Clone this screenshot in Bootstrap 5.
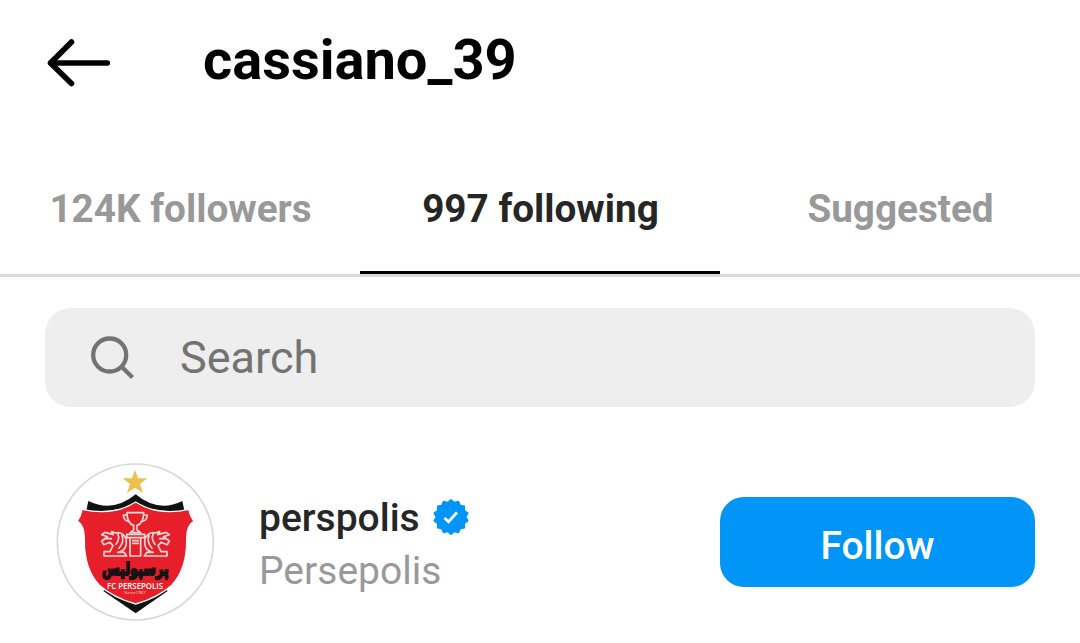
<!DOCTYPE html>
<html lang="en">
<head>
<meta charset="utf-8">
<meta name="viewport" content="width=device-width, initial-scale=1">
<title>cassiano_39</title>
<link href="https://cdn.jsdelivr.net/npm/bootstrap@5.3.0/dist/css/bootstrap.min.css" rel="stylesheet">
<style>
body{font-family:Roboto,"Liberation Sans",sans-serif;background:#fff;color:#262626;height:643px;overflow:hidden}
.top-bar{height:144px;padding:30px 45px 0}
.title{font-size:56px;line-height:60px;font-weight:700;color:#000;margin:0 0 0 92px}
.back{width:66px;height:66px}
.tabs{height:133px;border-bottom:3px solid #dadada}
.tabs .nav-link{font-size:38.7px;line-height:46px;font-weight:700;color:#999;padding:42px 0 0 1px;height:130px;border-bottom:3px solid transparent;border-radius:0;white-space:nowrap;text-align:center}
.tabs .nav-link.active{color:#262626;border-bottom-color:#000}
.search-box{margin:31px 45px 0;height:99px;border-radius:26px;background:#eee;padding:0 45px}
.search-box input,.search-box input:focus{background:none;border:0;box-shadow:none;font-size:45px;line-height:54px;padding:0;margin-left:45px;color:#737373}
.search-box input::placeholder{color:#737373;opacity:1}
.person{padding:48px 45px 0 50px}
.names{margin:40px 0 0 39px}
.user{font-size:39px;line-height:46px;font-weight:500;color:#262626}
.verified{margin:-2px 0 0 12px}
.full{font-size:39px;line-height:46px;color:#999;margin-top:7px}
.follow{width:315px;height:90px;margin-top:42px;border-radius:24px;background:#0095f6;border:0;color:#fff;font-size:39px;font-weight:500;line-height:46px;padding:8px 0 0}
</style>
</head>
<body>
<header class="top-bar d-flex align-items-start">
  <svg class="back" viewBox="45 30 66 66" fill="none" stroke="#000" stroke-width="5.6" stroke-linecap="round" stroke-linejoin="round"><path d="M107.300 63H50.500M71.500 42L50.500 63L71.500 83.500"/></svg>
  <h1 class="title">cassiano_39</h1>
</header>
<nav class="tabs row g-0">
  <div class="col-4"><a class="nav-link" href="#">124K followers</a></div>
  <div class="col-4"><a class="nav-link active" href="#">997 following</a></div>
  <div class="col-4"><a class="nav-link" href="#">Suggested</a></div>
</nav>
<main>
  <div class="search-box d-flex align-items-center">
    <svg class="flex-shrink-0" width="45" height="45" viewBox="90 335 45 45" fill="none" stroke="#737373" stroke-width="4.300"><circle cx="109.700" cy="355" r="16.500"/><path d="M121.500 366.500L132.500 377.500"/></svg>
    <input class="form-control" type="text" placeholder="Search" aria-label="Search">
  </div>
  <section class="person d-flex align-items-start">
    <svg class="flex-shrink-0" width="170" height="175" viewBox="0 0 510 525">
      <circle cx="256" cy="261" r="234" fill="#fff" stroke="#d8d8d8" stroke-width="5"/>
      <path d="M255 44L264 70H292L270 87L279 114L255 98L231 114L240 87L218 70H246Z" fill="#edbf4c"/>
      <path d="M115 138Q190 174 257 118Q324 174 397 138L408 190H104Z" fill="#111"/>
      <path d="M160 408L257 475L353 408L330 390H180Z" fill="#111"/>
      <path d="M96 163Q190 184 257 141Q324 184 417 163Q420 183 432 198Q410 210 410 250Q412 340 366 390Q325 428 257 447Q189 428 147 390Q101 340 103 250Q103 210 82 198Q93 183 96 163Z" fill="#e71f2a" stroke="#fff" stroke-width="4"/>
      <g fill="none" stroke="#ffd9d5" stroke-width="5" stroke-linejoin="round" stroke-linecap="round">
        <path d="M231 173H281Q281 205 261 211V225L272 233H240L251 225V211Q231 205 231 173ZM231 180H220Q221 199 239 200M281 180H292Q291 199 273 200"/>
        <path d="M230 238H284V248H230ZM240 250V303H272V250M248 257H265M248 265H265"/>
        <g id="bull">
          <path d="M228 250Q215 229 198 234L184 230L190 239L165 232L155 239L173 245L155 258L161 269L180 262L189 272L180 290H162V303H230L222 292H203Q234 287 228 250ZM204 238Q210 252 198 268M216 242Q224 259 207 280M168 251L184 251"/>
        </g>
        <use href="#bull" transform="translate(513 0) scale(-1 1)"/>
      </g>
      <text x="256" y="360" text-anchor="middle" textLength="200" lengthAdjust="spacingAndGlyphs" font-family="DejaVu Sans, sans-serif" font-weight="700" font-size="52" fill="#191113" stroke="#191113" stroke-width="6" direction="rtl">پرسپولیس</text>
      <text x="171" y="402" textLength="168" lengthAdjust="spacingAndGlyphs" font-family="Open Sans, sans-serif" font-weight="600" font-size="24" fill="#fff">FC PERSEPOLIS</text>
      <text x="223" y="418" textLength="65" lengthAdjust="spacingAndGlyphs" font-family="Open Sans, sans-serif" font-size="13" fill="#ffd0cb">Since1967</text>
    </svg>
    <div class="names">
      <div class="user d-flex align-items-center">perspolis
        <svg class="verified" width="38" height="38" viewBox="-19 -19 38 38"><path d="M0-17.200L3.300-14.400L7.500-15.500L9.200-11.600L13.400-10.700L13.300-6.400L16.800-3.800L14.800 0L16.800 3.800L13.300 6.400L13.400 10.700L9.200 11.600L7.500 15.500L3.300 14.400L0 17.200L-3.300 14.400L-7.500 15.500L-9.200 11.600L-13.400 10.700L-13.300 6.400L-16.800 3.800L-14.800 0L-16.800-3.800L-13.300-6.400L-13.400-10.700L-9.200-11.600L-7.500-15.500L-3.300-14.400Z" fill="#0095f6" stroke="#0095f6" stroke-width="1.500" stroke-linejoin="round"/><path d="M-6.500 1L-2.500 4.700L6-4.500" fill="none" stroke="#fff" stroke-width="2.800"/></svg>
      </div>
      <div class="full">Persepolis</div>
    </div>
    <button class="follow btn ms-auto" type="button">Follow</button>
  </section>
</main>
<script src="https://cdn.jsdelivr.net/npm/bootstrap@5.3.0/dist/js/bootstrap.bundle.min.js"></script>
</body>
</html>
